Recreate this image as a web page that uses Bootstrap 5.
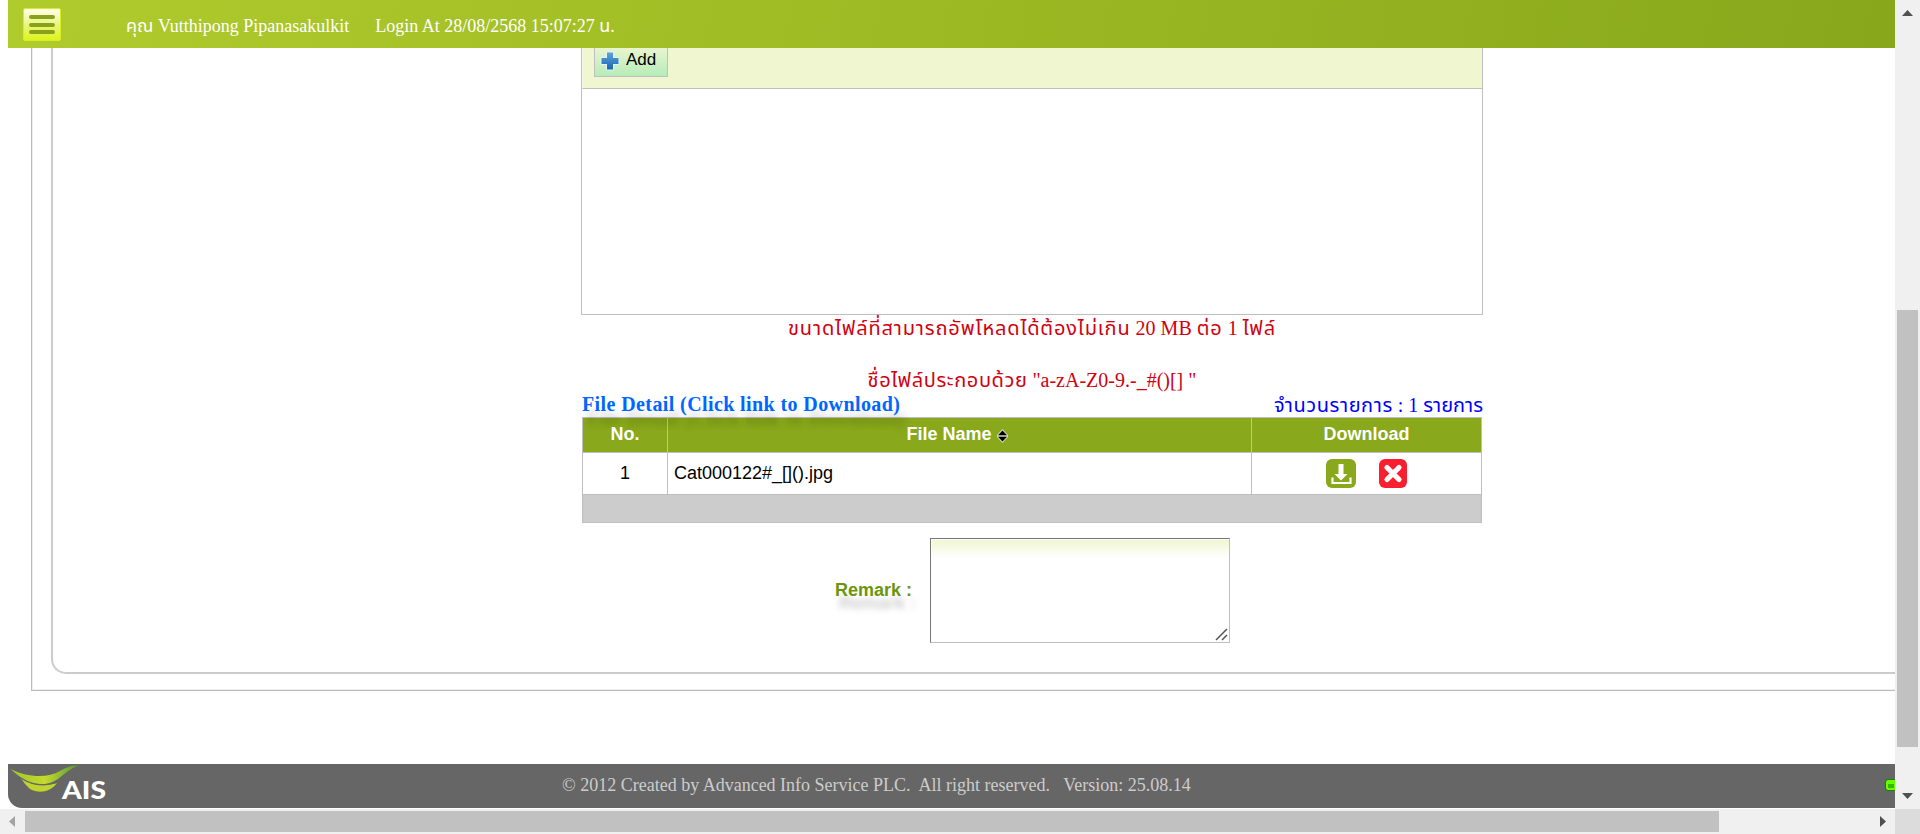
<!DOCTYPE html>
<html lang="th">
<head>
<meta charset="utf-8">
<title>File Upload</title>
<meta name="viewport" content="width=device-width, initial-scale=1">
<link href="https://cdn.jsdelivr.net/npm/bootstrap@5.3.0/dist/css/bootstrap.min.css" rel="stylesheet">
<style>
  body { font-family: "Liberation Serif", "Noto Sans Thai", "Noto Sans", serif; font-size: 18px; color: #000; line-height: 1.2; }
  .sans { font-family: "Liberation Sans", sans-serif; }
  .screen { display: grid; grid-template: 809px 25px / 1895px 25px; width: 1920px; height: 834px; }
  .topbar { height: 48px; background: linear-gradient(100deg, #b0cb2c, #88a71b); color: #fff; padding: 0 0 0 15px; margin-left: 8px; white-space: pre; }
  .menu-btn { width: 38px; height: 33px; padding: 6px 5px; gap: 3.5px; margin-top: 8px; border: 1px solid #d9ee20; border-radius: 2px; background: linear-gradient(#fffff0, #eaf581 50%, #dcf51c); }
  .menu-btn i { display: block; height: 4px; border-radius: 2px; background: #88a31b; }
  .user { margin: 16px 0 0 65px; }
  .login { margin: 16px 0 0 26px; }
  .outer-frame { margin-left: 31px; height: 643px; border: solid #bbb; border-width: 0 0 1px 1px; box-shadow: inset 1px -1px #eee; padding: 0 0 16px 19px; }
  .inner-frame { height: 626px; border: solid #ccc; border-width: 0 0 2px 2px; border-bottom-left-radius: 15px; }
  .form-col { width: 902px; margin-left: 528px; }
  .upload { height: 267px; border: 1px solid #bfbfbf; border-top: 0; }
  .upload-bar { height: 41px; background: #eff6d0; border-bottom: 1px solid #bfbfbf; border-left: 1px solid #f6f9e6; padding-left: 11px; }
  .add-btn { width: 74px; height: 29px; border: 1px solid #bfbfbf; border-top: 0; background: linear-gradient(#e9f5ce, #b6ecba); padding: 0 0 3px 5px; gap: 6px; font-size: 17px; }
  .hint { color: #d2000f; font-size: 20px; line-height: 26px; text-align: center; white-space: pre; }
  .hint + .hint { margin: 26px 0 -1px; }
  .th-wide { letter-spacing: .85px; }
  .th-mid { letter-spacing: .6px; }
  .detail-row { height: 25px; padding-left: 1px; position: relative; z-index: 1; white-space: nowrap; }
  .detail-title { font-size: 20px; line-height: 24px; letter-spacing: .4px; color: #06f; font-weight: bold; text-shadow: 5px 14px 7px rgba(0,0,0,.2); }
  .count { font-size: 20px; line-height: 26px; color: #00f; }
  .files { width: 900px; margin-left: 1px; border-collapse: collapse; table-layout: fixed; }
  .files th, .files td { border: 1px solid #bfbfbf; padding: 0 6px; text-align: center; line-height: 20px; }
  .files th { background: #89a81b; color: #fff; height: 35px; padding-bottom: 2px; }
  .files th.sortable { padding-right: 11px; }
  .files tbody td { height: 42px; padding-bottom: 1px; }
  .files tbody td:last-child { padding-bottom: 0; }
  .files tfoot td { height: 28px; background: #ccc; }
  .remark { margin-left: 254px; padding-top: 15px; gap: 18px; }
  .remark label { width: 77px; color: #6b960c; font-weight: bold; text-shadow: 4px 13px 6px rgba(0,0,0,.2); white-space: nowrap; }
  .remark-box { width: 300px; height: 105px; }
  .remark-box textarea { width: 300px; height: 105px; resize: none; border: 1px solid; border-color: #767676 #bfbfbf #bfbfbf #767676; background: linear-gradient(#eff6d0, #fff) 1px 1px / 297px 18px no-repeat #fff; outline: 0; }
  .grip { right: 2px; bottom: 2px; }
  .foot { height: 44px; margin-left: 8px; margin-top: 73px; background: #666; color: #ccc; border-bottom-left-radius: 14px; white-space: pre; }
  .brand { width: 110px; height: 44px; }
  .copyright { margin-left: 444px; line-height: 42px; }
  .status { width: 10px; height: 12px; margin-top: 15px; border: 1px solid #217c00; border-right: 0; border-radius: 3px 0 0 3px; background: #6f0; padding: 4px 1px 0 2px; }
  .status i { display: block; height: 4px; background: #38b600; }
  .track { background: #f0f0f0; }
  .thumb { background: #c1c1c1; }
</style>
</head>
<body>
<div class="screen overflow-hidden">
  <div class="overflow-hidden">
    <header class="topbar d-flex align-items-start">
      <div class="menu-btn d-flex flex-column"><i></i><i></i><i></i></div>
      <span class="user">คุณ Vutthipong Pipanasakulkit</span><span class="login">Login At 28/08/2568 15:07:27 น.</span>
    </header>
    <main class="outer-frame">
      <div class="inner-frame">
        <div class="form-col">
          <section class="upload">
            <div class="upload-bar">
              <div class="add-btn d-flex align-items-center sans">
                <svg width="20" height="20" viewBox="0 0 20 20"><defs><linearGradient id="p" x2="0" y2="1"><stop stop-color="#5fa3dc"/><stop offset="1" stop-color="#1766b2"/></linearGradient></defs><path d="M7 1.500h6V7h5.500v6H13v5.500H7V13H1.500V7H7z" fill="url(#p)" stroke="#e6f1f3" stroke-width="2" paint-order="stroke" stroke-linejoin="round"/></svg>
                <span>Add</span>
              </div>
            </div>
          </section>
          <div class="hint"><span class="th-wide">ขนาดไฟล์ที่สามารถอัพโหลดได้ต้องไม่เกิน</span> 20 MB <span class="th-wide">ต่อ</span> 1 <span class="th-wide">ไฟล์</span></div>
          <div class="hint"><span class="th-mid">ชื่อไฟล์ประกอบด้วย</span> "a-zA-Z0-9.-_#()[] "</div>
          <div class="detail-row d-flex justify-content-between">
            <span class="detail-title">File Detail (Click link to Download)</span>
            <span class="count"><span class="th-mid">จำนวนรายการ</span> : 1 รายการ</span>
          </div>
          <table class="files sans">
            <colgroup><col style="width:85px"><col style="width:584px"><col></colgroup>
            <thead><tr><th>No.</th><th class="sortable">File Name <svg width="11" height="14" viewBox="0 0 11 14" style="margin-bottom:-2px"><path d="M5.500 0 11 6v2l-5.500 6L0 8V6z" fill="#d5dcba"/><path d="M5.500 1.500 10 6.200H1zM1 7.800h9L5.500 12.500z" fill="#000"/></svg></th><th>Download</th></tr></thead>
            <tbody><tr><td>1</td><td class="text-start">Cat000122#_[]().jpg</td>
              <td><div class="d-flex justify-content-center" style="gap:23px">
                <svg width="30" height="29" viewBox="0 0 30 29"><rect width="30" height="29" rx="6" fill="#89a81b"/><path d="M12.500 5h5v10h4L15 21.500 8.500 15h4z" fill="#fff"/><path d="M6.500 18.500v5.500h18v-5.500" fill="none" stroke="#fff" stroke-width="2.200"/></svg>
                <svg width="28" height="29" viewBox="0 0 28 29"><rect width="28" height="29" rx="6" fill="#f8202e"/><path d="M8 8.500 20 20.500M20 8.500 8 20.500" stroke="#fff" stroke-width="5.200" stroke-linecap="round"/></svg>
              </div></td></tr></tbody>
            <tfoot><tr><td colspan="3"></td></tr></tfoot>
          </table>
          <div class="remark d-flex align-items-center sans">
            <label for="remark">Remark :</label>
            <div class="remark-box position-relative"><textarea id="remark"></textarea>
              <svg class="grip position-absolute" width="13" height="13" viewBox="0 0 13 13"><path d="M1 12 12 1M7 12l5-5" stroke="#555" stroke-width="1.500"/></svg>
            </div>
          </div>
        </div>
      </div>
    </main>
    <footer class="foot d-flex">
      <svg class="brand" viewBox="0 0 110 44"><defs><linearGradient id="w"><stop stop-color="#9fc62c"/><stop offset=".5" stop-color="#c6d92d"/><stop offset="1" stop-color="#4f9a34"/></linearGradient></defs>
        <path d="M2.500 5C18 13 39 15 52 7 58 3 65 1 71 1.500 61 5 58 9 50 15 39 23 23 21 14 14 9 11 6 8 2.500 5z" fill="url(#w)"/>
        <path d="M13 14.500C25 23 37 22.500 49 19 42 30 25 30 19 22 16 19 15 17 13 14.500z" fill="#bfd42d"/>
        <path d="M14 14.500C25 22 38 21.500 49 18.500" fill="none" stroke="#666" stroke-width="1"/>
        <text x="54" y="34.500" textLength="44" lengthAdjust="spacingAndGlyphs" font-family="Lato, sans-serif" font-weight="900" font-size="24" fill="#fff">AIS</text></svg>
      <span class="copyright">© 2012 Created by Advanced Info Service PLC.  All right reserved.   Version: 25.08.14</span>
      <div class="status ms-auto"><i></i></div>
    </footer>
  </div>
  <div class="track d-flex flex-column align-items-center">
    <svg width="25" height="25"><path d="M7 16h11l-5.500-6z" fill="#505050"/></svg>
    <div class="thumb" style="width:21px;height:437px;margin-top:285px"></div>
    <svg class="mt-auto" width="25" height="25"><path d="M7 9h11l-5.500 6z" fill="#505050"/></svg>
  </div>
  <div class="track d-flex align-items-center">
    <svg width="25" height="25"><path d="M15 7v11l-6-5.500z" fill="#a3a3a3"/></svg>
    <div class="thumb" style="width:1694px;height:21px"></div>
    <svg class="ms-auto" width="25" height="25"><path d="M10 7v11l6-5.500z" fill="#505050"/></svg>
  </div>
  <div style="background:#dcdcdc"></div>
</div>
<script src="https://cdn.jsdelivr.net/npm/bootstrap@5.3.0/dist/js/bootstrap.bundle.min.js"></script>
</body>
</html>
